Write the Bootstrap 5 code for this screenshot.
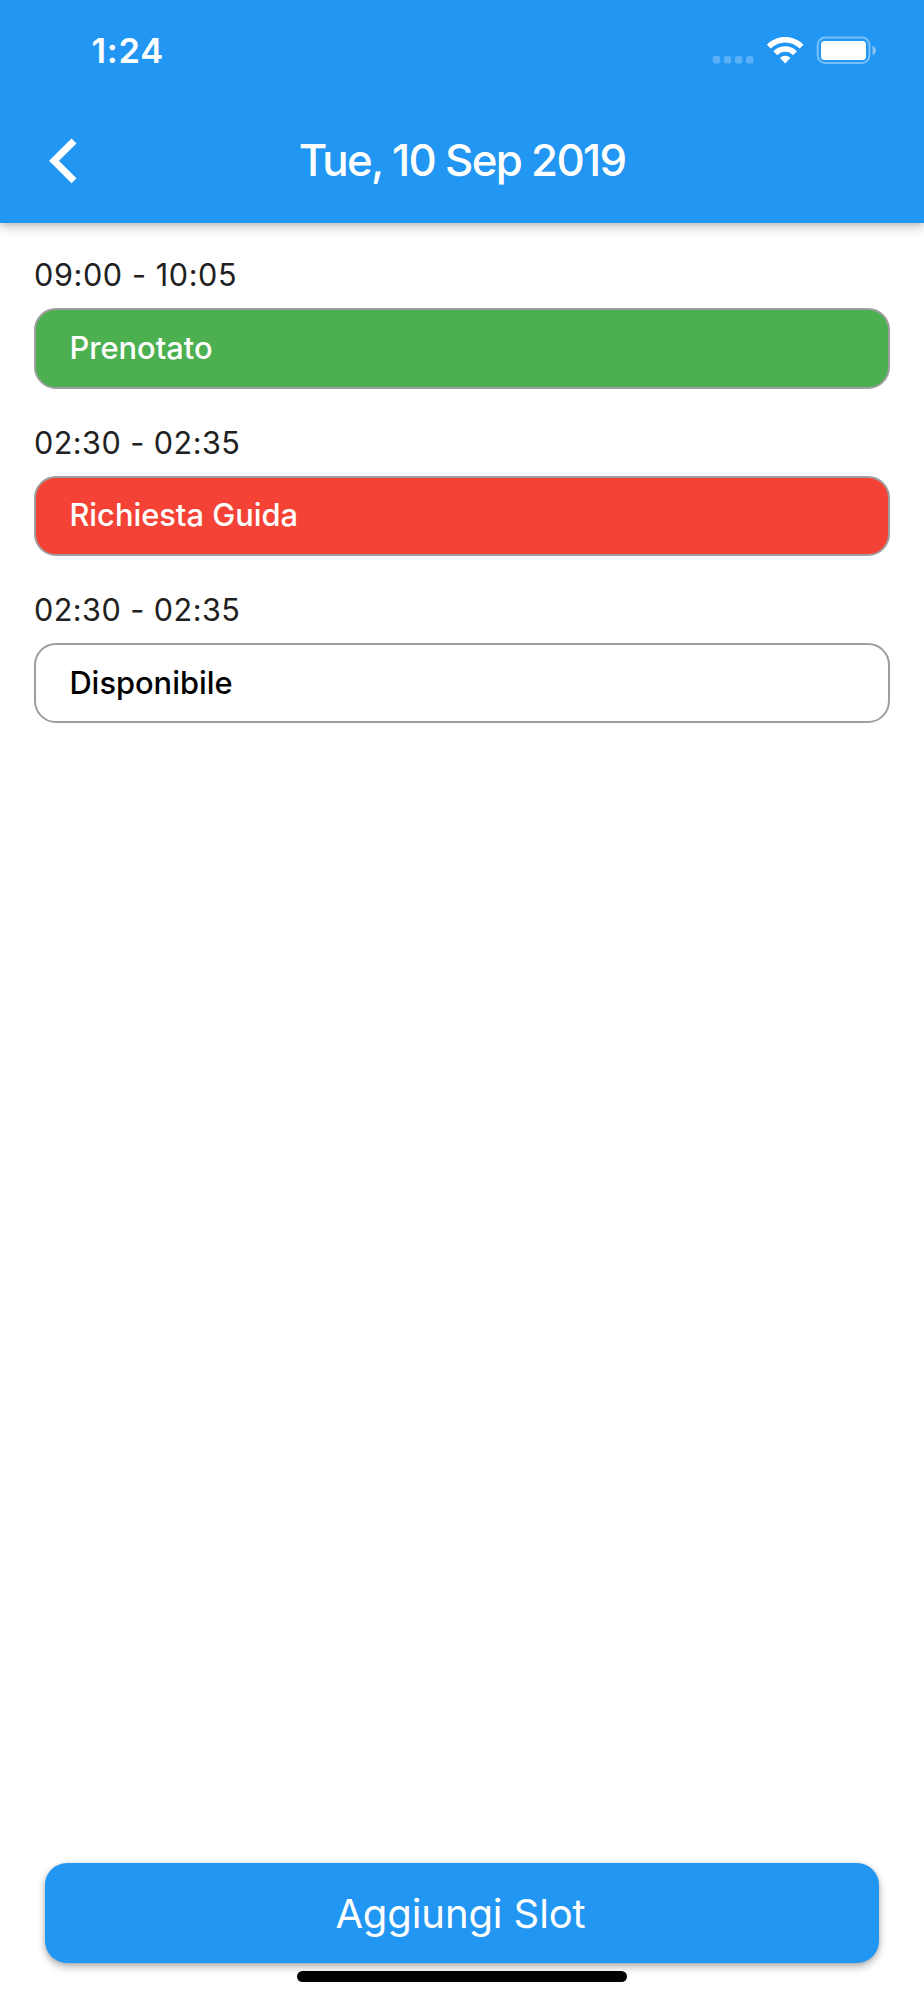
<!DOCTYPE html>
<html lang="it">
<head>
<meta charset="utf-8">
<meta name="viewport" content="width=device-width, initial-scale=1">
<title>Slot</title>
<link href="https://cdn.jsdelivr.net/npm/bootstrap@5.3.0/dist/css/bootstrap.min.css" rel="stylesheet">
<style>
body{font-family:Inter,"Liberation Sans",sans-serif;background:#fff;color:#000;min-height:2000px}
.app-top{background:#2196f3;height:223.2px;box-shadow:0 4px 11px rgba(0,0,0,.22),0 1px 5px rgba(0,0,0,.1)}
.status{height:100px;padding:0 48px 0 91.5px}
.clock{font-size:34.5px;font-weight:600;line-height:40px;margin-top:31px;letter-spacing:.7px}
.toolbar{height:122px;display:grid;grid-template-columns:125px 1fr 125px;align-items:center}
.toolbar h1{font-size:43.8px;font-weight:500;letter-spacing:-1.7px}
.slots{padding:30px 33.6px 0 34px}
.slot{height:167.4px}
.hours{font-size:30.6px;line-height:44px;font-weight:400;color:#212121;letter-spacing:.45px}
.slot:first-child .hours{letter-spacing:.6px}
.state{height:80.4px;margin-top:11px;border:2.2px solid #9e9e9e;border-radius:22px;padding:0 0 1px 33.4px;font-size:30.8px;font-weight:500}
.booked{background:#4caf50;color:#fff}
.asked{background:#f44336;color:#fff}
.add{height:100.4px;margin:0 44.7px;border:0;border-radius:22px;background:#2196f3;color:#fff;font-size:40px;letter-spacing:-.1px;padding:3px 3px 0 0;box-shadow:0 4px 8px rgba(0,0,0,.27),0 1px 4px rgba(0,0,0,.14)}
.home{width:330px;height:11px;border-radius:6px;background:#000;margin:8px auto 18px}
</style>
</head>
<body class="d-flex flex-column">
<header class="app-top text-white">
<div class="status d-flex justify-content-between align-items-start">
<span class="clock">1:24</span>
<svg width="164" height="30" viewBox="712 36 164 30" style="margin-top:36px" fill="#fff">
<g opacity=".25"><rect x="712.8" y="56" width="7.4" height="7.4" rx="2"/><rect x="723.8" y="56" width="7.4" height="7.4" rx="2"/><rect x="734.9" y="56" width="7.4" height="7.4" rx="2"/><rect x="746" y="56" width="7.4" height="7.4" rx="2"/></g>
<path d="M766.9 44.7C777 34.5 793.300 34.5 803.500 44.700L799.700 48.500C791.600 40.500 778.800 40.500 770.700 48.500ZM773.400 51.300C780 44.700 790.400 44.700 797 51.300L793.100 55.200C788.700 50.700 781.700 50.700 777.300 55.200ZM780 57.900C783 55.100 787.500 55.100 790.400 57.900L785.200 63.500Z"/>
<rect x="817.700" y="37.500" width="51.700" height="25.600" rx="7.500" fill="none" stroke="#fff" stroke-width="2" opacity=".4"/>
<rect x="821" y="41" width="45" height="19" rx="3.500"/>
<path d="M872.500 45.700Q876 47.500 876 50.400T872.500 55Z" opacity=".45"/>
</svg>
</div>
<div class="toolbar">
<svg width="125" height="60" viewBox="0.5 131 125 60"><path d="M74.500 141L54.500 160.800L74.500 180.700" fill="none" stroke="#fff" stroke-width="7"/></svg>
<h1 class="m-0 text-center text-nowrap">Tue, 10 Sep 2019</h1>
</div>
</header>
<main class="slots flex-grow-1">
<section class="slot"><div class="hours">09:00 - 10:05</div><div class="state booked d-flex align-items-center">Prenotato</div></section>
<section class="slot"><div class="hours">02:30 - 02:35</div><div class="state asked d-flex align-items-center">Richiesta Guida</div></section>
<section class="slot"><div class="hours">02:30 - 02:35</div><div class="state d-flex align-items-center">Disponibile</div></section>
</main>
<button class="add" type="button">Aggiungi Slot</button>
<div class="home"></div>
<script src="https://cdn.jsdelivr.net/npm/bootstrap@5.3.0/dist/js/bootstrap.bundle.min.js"></script>
</body>
</html>
